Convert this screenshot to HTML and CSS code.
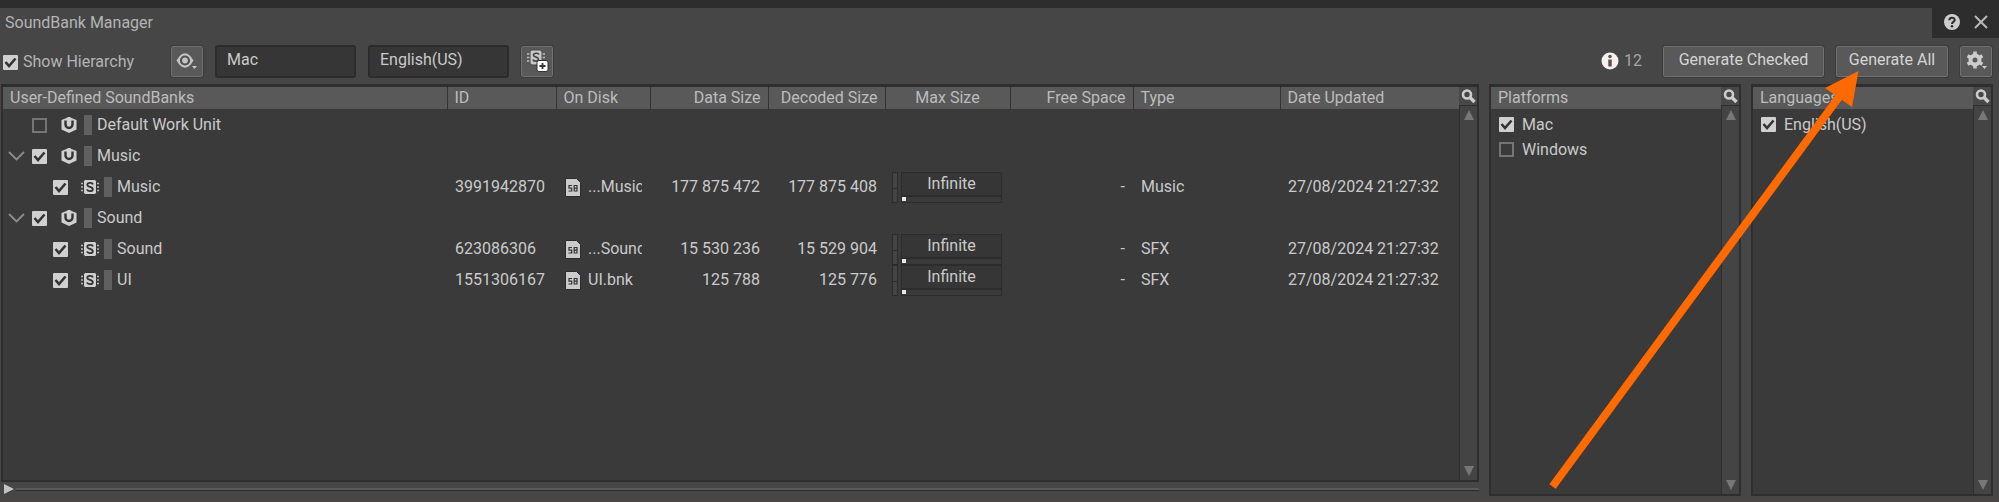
FILE: index.html
```html
<!DOCTYPE html>
<html lang="en">
<head>
<meta charset="utf-8">
<title>SoundBank Manager</title>
<link rel="stylesheet" href="styles.css">
</head>
<body>
<svg class="defs" width="0" height="0" aria-hidden="true">
  <symbol id="unit" viewBox="0 0 16 16"><path d="M8 0 15.500 3v9.500L8 16 .5 12.500V3z" fill="#d0d0d0"/><path d="M4.500 3.500V7.500a3.500 3.500 0 0 0 7 0V3.500" fill="none" stroke="#333" stroke-width="2.400"/><path d="M8 0v5" stroke="#d0d0d0" stroke-width="3"/></symbol>
  <symbol id="bank" viewBox="0 0 18 16"><path d="M0 4.500h18M0 8h18M0 11.500h18" stroke="#bbb" stroke-width="1.400"/><rect x="2.500" y=".5" width="13" height="15" rx="2" fill="#d0d0d0" stroke="#333" stroke-width="1"/><path d="M11.800 5.500C11.500 3.400 6.300 3.300 6.300 5.800c0 2.600 5.500 1.700 5.500 4.400 0 2.600-5.300 2.400-5.700.2" fill="none" stroke="#333" stroke-width="1.800"/></symbol>
  <symbol id="file" viewBox="0 0 16 19"><path d="M.5.500h11l4 4v14H.5z" fill="#cbcbcb" stroke="#2b2b2b"/><path d="M7 7.500H4v2.700h2.700v2.800H3.500M9.200 7v6.500M9.200 7.500h2.800v5.500H9.200M9.200 10.200h3" fill="none" stroke="#333" stroke-width="1.200"/></symbol>
  <symbol id="search" viewBox="0 0 18 18"><circle cx="8" cy="7.500" r="4" fill="none" stroke="#ccc" stroke-width="2.600"/><path d="m11 10.500 4.500 4.500" stroke="#ccc" stroke-width="3.400"/></symbol>
</svg>

<header class="titlebar">
  <h1>SoundBank Manager</h1>
  <div class="window-buttons">
    <button aria-label="Help"><svg width="16" height="16" viewBox="0 0 16 16"><circle cx="8" cy="8" r="8" fill="#ccc"/><path d="M5.300 6.300c0-3.600 5.400-3.400 5.400-.3C10.700 8 8 7.800 8 10" fill="none" stroke="#2d2d2d" stroke-width="2"/><circle cx="8" cy="12.300" r="1.300" fill="#2d2d2d"/></svg></button>
    <button aria-label="Close"><svg width="14" height="14" viewBox="0 0 14 14"><path d="m1 1 12 12M13 1 1 13" stroke="#b8b8b8" stroke-width="2"/></svg></button>
  </div>
</header>

<div class="toolbar">
  <label class="hierarchy"><input type="checkbox" checked>Show Hierarchy</label>
  <button class="btn icon-btn view" aria-label="View options"><svg width="24" height="22" viewBox="0 0 24 22"><path d="M1.500 10.500Q10-4 18.500 10.500 10 25 1.500 10.500z" fill="#c4c4c4"/><circle cx="10" cy="10.500" r="4" fill="none" stroke="#505050" stroke-width="2.200"/><path d="M17 16h5l-2.500 3z" fill="#c4c4c4"/></svg></button>
  <select aria-label="Platform"><option>Mac</option></select>
  <select aria-label="Language"><option>English(US)</option></select>
  <button class="btn icon-btn" aria-label="New SoundBank"><svg width="24" height="24" viewBox="0 0 24 24"><path d="M2 5h18M2 8.500h18M2 12h18" stroke="#bbb" stroke-width="1.400"/><rect x="5" y="1" width="12" height="15" rx="2" fill="#c8c8c8" stroke="#444"/><path d="M14 5.500c-.5-1.700-5.500-1.900-5.500.7 0 2.300 5 1.300 5 4.100 0 2.500-5 2.300-5.500.2" fill="none" stroke="#444" stroke-width="1.600"/><rect x="12" y="11.500" width="11" height="11" rx="2" fill="#fff" stroke="#333"/><path d="M17.500 14v6M14.500 17h6" stroke="#333" stroke-width="1.800"/></svg></button>
  <div class="messages"><svg width="18" height="18" viewBox="0 0 18 18"><circle cx="9" cy="9" r="8.500" fill="#f2f2f2"/><path d="M9 7.500v7" stroke="#6b4a44" stroke-width="3.400"/><circle cx="9" cy="4.500" r="1.800" fill="#6b4a44"/></svg><span>12</span></div>
  <button class="btn checked">Generate Checked</button>
  <button class="btn all">Generate All</button>
  <button class="btn icon-btn" aria-label="Settings"><svg width="24" height="22" viewBox="0 0 24 22"><circle cx="11" cy="10" r="4.500" fill="none" stroke="#ccc" stroke-width="4"/><path d="M11 1.500v3M11 15.500v3M3.600 5.800l2.600 1.500M15.800 12.700l2.600 1.500M3.600 14.200l2.600-1.500M15.800 7.300l2.600-1.500" stroke="#ccc" stroke-width="3.600"/><path d="M18 16h5l-2.500 3z" fill="#ccc"/></svg></button>
</div>

<main>
  <section class="banks">
    <div class="panel">
      <div class="content">
        <table>
          <colgroup><col><col class="c-id"><col class="c-disk"><col class="c-data"><col class="c-dec"><col class="c-max"><col class="c-free"><col class="c-type"><col class="c-date"></colgroup>
          <thead><tr><th>User-Defined SoundBanks</th><th>ID</th><th>On Disk</th><th class="num">Data Size</th><th class="num">Decoded Size</th><th class="mid">Max Size</th><th class="num">Free Space</th><th>Type</th><th>Date Updated</th></tr></thead>
          <tbody>
            <tr><td><label class="node"><span class="chev"></span><input type="checkbox"><svg class="unit"><use href="#unit"/></svg><i></i>Default Work Unit</label></td><td></td><td></td><td></td><td></td><td></td><td></td><td></td><td></td></tr>
            <tr><td><label class="node"><svg class="chev" viewBox="0 0 17 10"><path d="m1 1 7.500 7.500L16 1" fill="none" stroke="#8c8c8c" stroke-width="1.800"/></svg><input type="checkbox" checked><svg class="unit"><use href="#unit"/></svg><i></i>Music</label></td><td></td><td></td><td></td><td></td><td></td><td></td><td></td><td></td></tr>
            <tr><td><label class="node child"><input type="checkbox" checked><svg class="bank"><use href="#bank"/></svg><i></i>Music</label></td><td>3991942870</td><td><span class="disk"><svg><use href="#file"/></svg><span>...Music</span></span></td><td class="num">177 875 472</td><td class="num">177 875 408</td><td><span class="max"><b></b><span><input type="text" value="Infinite" aria-label="Max size of Music"><em></em></span></span></td><td class="num">-</td><td>Music</td><td>27/08/2024 21:27:32</td></tr>
            <tr><td><label class="node"><svg class="chev" viewBox="0 0 17 10"><path d="m1 1 7.500 7.500L16 1" fill="none" stroke="#8c8c8c" stroke-width="1.800"/></svg><input type="checkbox" checked><svg class="unit"><use href="#unit"/></svg><i></i>Sound</label></td><td></td><td></td><td></td><td></td><td></td><td></td><td></td><td></td></tr>
            <tr><td><label class="node child"><input type="checkbox" checked><svg class="bank"><use href="#bank"/></svg><i></i>Sound</label></td><td>623086306</td><td><span class="disk"><svg><use href="#file"/></svg><span>...Sound</span></span></td><td class="num">15 530 236</td><td class="num">15 529 904</td><td><span class="max"><b></b><span><input type="text" value="Infinite" aria-label="Max size of Sound"><em></em></span></span></td><td class="num">-</td><td>SFX</td><td>27/08/2024 21:27:32</td></tr>
            <tr><td><label class="node child"><input type="checkbox" checked><svg class="bank"><use href="#bank"/></svg><i></i>UI</label></td><td>1551306167</td><td><span class="disk"><svg><use href="#file"/></svg><span>UI.bnk</span></span></td><td class="num">125 788</td><td class="num">125 776</td><td><span class="max"><b></b><span><input type="text" value="Infinite" aria-label="Max size of UI"><em></em></span></span></td><td class="num">-</td><td>SFX</td><td>27/08/2024 21:27:32</td></tr>
          </tbody>
        </table>
      </div>
      <div class="side"><button aria-label="Search SoundBanks"><svg><use href="#search"/></svg></button><div class="scroll"><u></u><s></s></div></div>
    </div>
    <div class="splitter"><svg width="10" height="10"><path d="M0 0 10 5 0 10z" fill="#c4c4c4"/></svg><hr></div>
  </section>
  <section class="panel platforms">
    <div class="content">
      <h2>Platforms</h2>
      <label class="item"><input type="checkbox" checked>Mac</label>
      <label class="item"><input type="checkbox">Windows</label>
    </div>
    <div class="side"><button aria-label="Search platforms"><svg><use href="#search"/></svg></button><div class="scroll"><u></u><s></s></div></div>
  </section>
  <section class="panel languages">
    <div class="content">
      <h2>Languages</h2>
      <label class="item"><input type="checkbox" checked>English(US)</label>
    </div>
    <div class="side"><button aria-label="Search languages"><svg><use href="#search"/></svg></button><div class="scroll"><u></u><s></s></div></div>
  </section>
</main>

<svg class="arrow" width="460" height="420" viewBox="0 0 460 420" aria-hidden="true"><path d="M13.500 415.500 300 26" stroke="#ff6a00" stroke-width="8"/><path d="M319.500 0 286 17l27 19z" fill="#ff6a00"/></svg>
</body>
</html>
```
FILE: styles.css
```css
* { box-sizing: border-box; }

body {
  margin: 0;
  min-height: 100vh;
  display: flex;
  flex-direction: column;
  position: relative;
  background: #464646;
  color: #cacaca;
  font: 16px/20px Roboto, "Liberation Sans", sans-serif;
  border-bottom: 1px solid #544;
}

button, input, select { margin: 0; font: inherit; color: inherit; }
svg { display: block; flex: none; }
.defs, .arrow { position: absolute; }

/* Title bar */
.titlebar {
  display: flex;
  justify-content: space-between;
  height: 38px;
  border-top: 8px solid #2d2d2d;
}
h1 { margin: 0; padding: 5px; font-size: 16px; font-weight: 400; line-height: 20px; color: #b4b4b4; }
.window-buttons {
  display: flex;
  align-items: center;
  gap: 14px;
  width: 67px;
  padding: 0 0 3px 12px;
  background: #2d2d2d;
}
.window-buttons button { padding: 0; border: 0; background: none; }

/* Toolbar */
.toolbar { display: flex; align-items: center; gap: 12px; height: 46px; padding: 0 7px 0 3px; }
.hierarchy { display: flex; align-items: center; gap: 5px; width: 156px; padding-top: 2px; color: #b4b4b4; }
.btn {
  height: 31px;
  padding: 0 10px 2px;
  border: 1px solid #707070;
  border-radius: 2px;
  outline: 1px solid #3c3c3c;
  background: #595959;
  color: #d4d4d4;
  white-space: nowrap;
}
.icon-btn { display: grid; place-items: center; width: 32px; padding: 0; }
.checked { width: 161px; }
.all { width: 112px; }
select {
  appearance: none;
  width: 141px;
  height: 33px;
  padding: 0 10px 2px;
  border: 2px solid #2c2c2c;
  border-radius: 3px;
  background: #363636;
}
.messages { display: flex; align-items: center; gap: 5px; margin: 0 9px 0 auto; color: #a4a4a4; }

/* Tick boxes */
input[type="checkbox"] {
  appearance: none;
  flex: none;
  width: 15px;
  height: 15px;
  border: 2px solid #757575;
}
input[type="checkbox"]:checked {
  border: 0;
  border-radius: 1px;
  background: #d0d0d0 url("data:image/svg+xml,%3Csvg xmlns='http://www.w3.org/2000/svg' viewBox='0 0 15 15'%3E%3Cpath d='M2.500 7 6 11l6.500-7.500' fill='none' stroke='%23333' stroke-width='2.600'/%3E%3C/svg%3E");
}

/* Panels */
main { flex: 1; display: flex; gap: 10px; padding: 0 6px 5px 1px; }
.banks { flex: 1; min-width: 0; display: flex; flex-direction: column; }
.banks .panel { flex: 1; }
.panel { display: flex; border: 2px solid #2e2e2e; border-top-width: 3px; background: #3a3a3a; }
.platforms { width: 252px; }
.languages { width: 242px; }
.content { flex: 1; min-width: 0; }
h2, th { height: 22px; padding: 0 7px; background: #595959; color: #bcbcbc; font-size: 16px; font-weight: 400; line-height: 22px; }
h2 { margin: 0 0 3px; }
.item { display: flex; align-items: center; gap: 8px; height: 25px; padding-left: 8px; }
.side { display: flex; flex-direction: column; width: 18px; background: #2e2e2e; gap: 1px; }
.side button { display: block; height: 18px; padding: 0; border: 0; background: #484848; }
.side svg { width: 18px; height: 18px; }
.scroll { flex: 1; display: flex; flex-direction: column; justify-content: space-between; align-items: center; margin-left: 1px; padding: 4px 0; background: #444; }
.scroll u, .scroll s { border: 5px solid transparent; }
.scroll u { border-top: 0; border-bottom: 10px solid #777; }
.scroll s { border-bottom: 0; border-top: 10px solid #777; }

/* SoundBank table */
table { width: 100%; table-layout: fixed; border-collapse: collapse; }
thead { border-bottom: 1px solid #3a3a3a; }
th { text-align: left; white-space: nowrap; }
th + th { border-left: 1px solid #333; }
td { height: 31px; padding: 0 8px; white-space: nowrap; }
th.num, td.num { text-align: right; }
th.mid { text-align: center; }
.c-id { width: 109px; }
.c-disk { width: 94px; }
.c-data { width: 118px; }
.c-dec { width: 117px; }
.c-max { width: 125px; }
.c-free { width: 123px; }
.c-type { width: 147px; }
.c-date { width: 179px; }

.node { display: flex; align-items: center; margin-left: -3px; }
.node.child { padding-left: 45px; }
.chev { width: 17px; height: 10px; margin-right: 7px; }
.node i { width: 8px; height: 20px; margin: 0 5px 0 7px; background: #606060; }
.unit { width: 16px; height: 16px; margin-left: 14px; }
.bank { width: 18px; height: 16px; margin: 0 -2px 0 13px; }
.disk { display: flex; align-items: center; gap: 7px; margin-left: 1px; }
.disk svg { width: 16px; height: 19px; }
.disk span { width: 54px; overflow: hidden; }
.max { display: flex; gap: 3px; margin-left: -1px; }
.max b { width: 6px; height: 31px; border: 1px solid #2c2c2c; background: linear-gradient(#444 15px, #2c2c2c 15px 16px, #444 16px); }
.max > span { width: 101px; border: 1px solid #2c2c2c; }
.max input { display: block; width: 100%; height: 24px; padding: 0; border: 0; border-bottom: 2px solid #2c2c2c; background: #363636; text-align: center; }
.max em { display: block; width: 4px; height: 4px; background: #e8e8e8; }

/* Bottom splitter */
.splitter { display: flex; align-items: center; gap: 2px; height: 14px; padding-left: 3px; }
.splitter hr { flex: 1; height: 3px; margin: 0; border: 0; border-top: 2px solid #595959; background: #2d2d2d; }

/* Annotation arrow */
.arrow { top: 71px; right: 0; pointer-events: none; }
```
